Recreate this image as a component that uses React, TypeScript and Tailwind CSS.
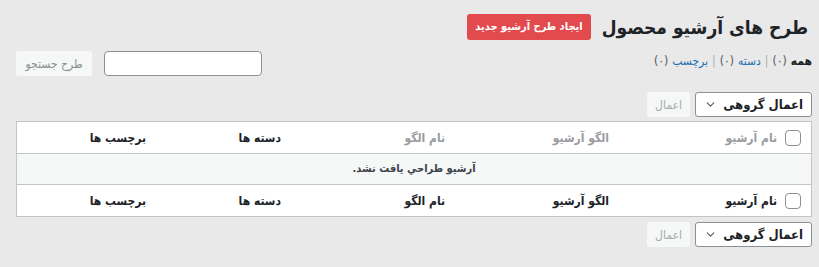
import { ChevronDown } from 'lucide-react';

const columns = [
  { label: 'نام آرشیو', sortable: true, w: 'w-[168px]' },
  { label: 'الگو آرشیو', sortable: true, w: 'w-[164px]' },
  { label: 'نام الگو', sortable: true, w: 'w-[164px]' },
  { label: 'دسته ها', sortable: false, w: 'w-[135px]' },
  { label: 'برچسب ها', sortable: false, w: 'flex-1' },
];

const BulkActions = () => (
  <div className="flex items-center gap-[5px]">
    <div className="flex h-[25px] w-[117px] items-center justify-between whitespace-nowrap rounded-[3px] border border-[#8c8f94] bg-white pl-[8px] pr-[8px]">
      <span className="text-[13px] font-bold text-[#1d2327]">اعمال گروهی</span>
      <ChevronDown className="h-[13px] w-[13px] text-[#50575e]" strokeWidth={2} />
    </div>
    <button className="h-[25px] w-[43px] whitespace-nowrap rounded-[3px] bg-[#f6f7f7] text-[12px] text-[#a7aaad]">
      اعمال
    </button>
  </div>
);

const Checkbox = () => (
  <span className="block h-[16px] w-[16px] rounded-[4px] border border-[#8c8f94] bg-white" />
);

const HeaderRow = ({ footer }: { footer?: boolean }) => (
  <div className="flex h-[31px] items-center bg-white">
    <div className="flex w-[34px] justify-center pr-[3px]">
      <Checkbox />
    </div>
    {columns.map((c) => (
      <div
        key={c.label}
        className={`${c.w} text-[12px] font-bold ${
          c.sortable && !footer ? 'text-[#9a9ca0]' : 'text-[#1d2327]'
        }`}
      >
        {c.label}
      </div>
    ))}
  </div>
);

export default function App() {
  return (
    <div
      dir="rtl"
      className="min-h-[267px] bg-[#e9e9e9] pl-[16px] pr-[7px] pt-[14px] font-['DejaVu_Sans_Condensed','DejaVu_Sans',sans-serif]"
    >
      <div className="flex items-center gap-[11px] pr-[4px]">
        <h1 className="whitespace-nowrap text-[19px] font-bold leading-[26px] text-[#1d2327]">طرح های آرشیو محصول</h1>
        <button className="h-[26px] whitespace-nowrap rounded-[3px] bg-[#e24a4e] px-[8px] text-[11px] font-bold text-white">
          ایجاد طرح آرشیو جدید
        </button>
      </div>

      <div className="mt-[11px] flex items-start justify-between">
        <div className="mt-[1px] flex items-center gap-[4px] whitespace-nowrap text-[12px]">
          <span className="font-bold text-[#1d2327]">همه</span>
          <span className="text-[#50575e]">(۰)</span>
          <span className="text-[#a7aaad]">|</span>
          <span className="text-[#2271b1]">دسته</span>
          <span className="text-[#50575e]">(۰)</span>
          <span className="text-[#a7aaad]">|</span>
          <span className="text-[#2271b1]">برچسب</span>
          <span className="text-[#50575e]">(۰)</span>
        </div>
        <div className="flex items-center gap-[12px]">
          <input className="h-[25px] w-[158px] rounded-[4px] border border-[#8c8f94] bg-white" />
          <button className="h-[25px] w-[76px] whitespace-nowrap rounded-[3px] bg-[#f6f7f7] text-[12px] text-[#8c8f94]">
            طرح جستجو
          </button>
        </div>
      </div>

      <div className="mt-[16px]">
        <BulkActions />
      </div>

      <div className="mt-[4px] border border-[#c3c4c7]">
        <HeaderRow />
        <div className="flex h-[32px] items-center justify-center border-y border-[#c3c4c7] bg-[#f6f7f7] text-[11px] font-bold text-[#3c434a]">
          آرشیو طراحي يافت نشد.
        </div>
        <HeaderRow footer />
      </div>

      <div className="mt-[5px]">
        <BulkActions />
      </div>
    </div>
  );
}
